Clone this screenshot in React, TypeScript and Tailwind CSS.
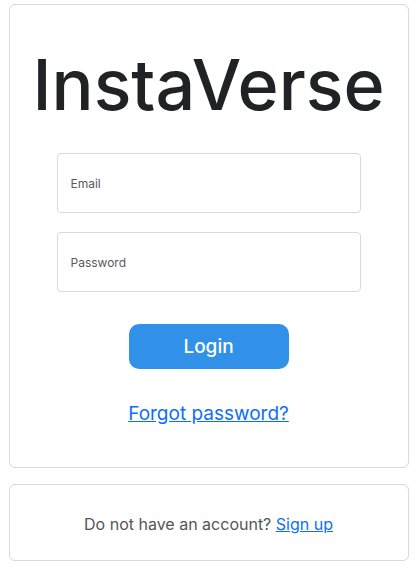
import { useState } from "react";

export default function App() {
  const [email, setEmail] = useState<string>('');
  const [password, setPassword] = useState<string>('');

  const inputClass = "w-[304px] h-[60px] px-[13px] rounded-[4px] border border-[#d9d9d9] bg-white text-[12px] text-[#212529] placeholder:text-[#595959] focus:outline-none";

  return (
    <div className="min-h-screen bg-white pt-[4px] font-['Inter',sans-serif]">
      <div className="mx-auto w-[400px] flex flex-col gap-[16px]">
        <form
          className="flex flex-col items-center border border-[#d9d9d9] rounded-[6px] pt-[36px] pb-[41px]"
          onSubmit={(e) => e.preventDefault()}
        >
          <h1 className="text-[70px] leading-[87px] font-medium text-[#1f2326]">
            InstaVerse
          </h1>

          <div className="flex flex-col gap-[19px] mt-[25px]">
            <input
              type="email"
              placeholder="Email"
              value={email}
              className={inputClass}
              onChange={({ target }) => setEmail(target.value)}
            />
            <input
              type="password"
              placeholder="Password"
              value={password}
              className={inputClass}
              onChange={({ target }) => setPassword(target.value)}
            />
          </div>

          <button className="mt-[32px] w-[160px] h-[45px] pt-[2px] rounded-[10px] bg-[#3190e8] text-white text-[19px] font-medium">
            Login
          </button>

          <a href="#" className="mt-[33px] text-[19px] leading-[24px] text-[#0d6efd] underline">
            Forgot password?
          </a>
        </form>

        <div className="flex items-center justify-center h-[77px] pt-[2px] border border-[#d9d9d9] rounded-[6px] text-[16px] text-[#555]">
          <p>
            Do not have an account?{" "}
            <a href="#" className="text-[#0d6efd] underline">Sign up</a>
          </p>
        </div>
      </div>
    </div>
  );
}
